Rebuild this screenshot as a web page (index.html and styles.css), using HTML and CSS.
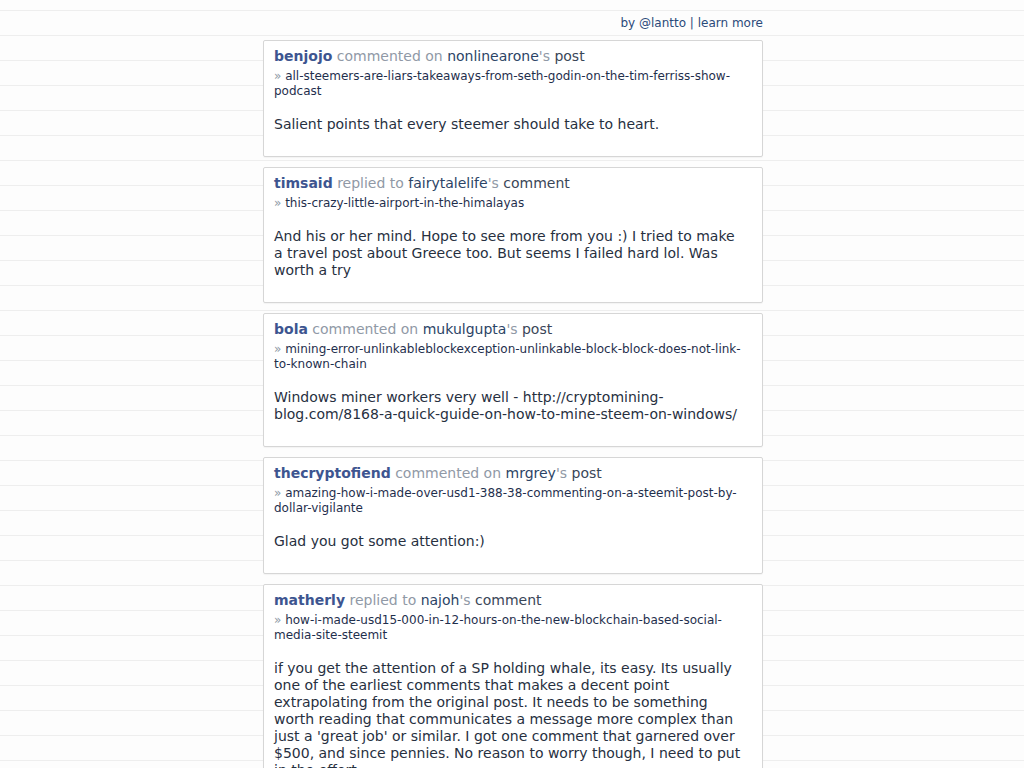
FILE: index.html
```html
<!DOCTYPE html>
<html lang="en">
<head>
<meta charset="utf-8">
<title>Steemit comments</title>
<link rel="stylesheet" href="styles.css">
</head>
<body>
<div class="wrap">
  <div class="top">by <a href="#">@lantto</a> | <a href="#">learn more</a></div>
  <div class="feed">
    <div class="card">
      <div class="title"><a class="user" href="#">benjojo</a> <span class="muted">commented on</span> <a class="author" href="#">nonlinearone</a><span class="muted">'s</span> <span class="kind">post</span></div>
      <div class="slug"><span class="muted">»</span> all-steemers-are-liars-takeaways-from-seth-godin-on-the-tim-ferriss-show-podcast</div>
      <p class="body">Salient points that every steemer should take to heart.</p>
    </div>
    <div class="card">
      <div class="title"><a class="user" href="#">timsaid</a> <span class="muted">replied to</span> <a class="author" href="#">fairytalelife</a><span class="muted">'s</span> <span class="kind">comment</span></div>
      <div class="slug"><span class="muted">»</span> this-crazy-little-airport-in-the-himalayas</div>
      <p class="body">And his or her mind. Hope to see more from you :) I tried to make a travel post about Greece too. But seems I failed hard lol. Was worth a try</p>
    </div>
    <div class="card">
      <div class="title"><a class="user" href="#">bola</a> <span class="muted">commented on</span> <a class="author" href="#">mukulgupta</a><span class="muted">'s</span> <span class="kind">post</span></div>
      <div class="slug"><span class="muted">»</span> mining-error-unlinkableblockexception-unlinkable-block-block-does-not-link-to-known-chain</div>
      <p class="body">Windows miner workers very well - http://cryptomining-blog.com/8168-a-quick-guide-on-how-to-mine-steem-on-windows/</p>
    </div>
    <div class="card">
      <div class="title"><a class="user" href="#">thecryptofiend</a> <span class="muted">commented on</span> <a class="author" href="#">mrgrey</a><span class="muted">'s</span> <span class="kind">post</span></div>
      <div class="slug"><span class="muted">»</span> amazing-how-i-made-over-usd1-388-38-commenting-on-a-steemit-post-by-dollar-vigilante</div>
      <p class="body">Glad you got some attention:)</p>
    </div>
    <div class="card">
      <div class="title"><a class="user" href="#">matherly</a> <span class="muted">replied to</span> <a class="author" href="#">najoh</a><span class="muted">'s</span> <span class="kind">comment</span></div>
      <div class="slug"><span class="muted">»</span> how-i-made-usd15-000-in-12-hours-on-the-new-blockchain-based-social-media-site-steemit</div>
      <p class="body">if you get the attention of a SP holding whale, its easy. Its usually one of the earliest comments that makes a decent point extrapolating from the original post. It needs to be something worth reading that communicates a message more complex than just a 'great job' or similar. I got one comment that garnered over $500, and since pennies. No reason to worry though, I need to put in the effort.</p>
    </div>
  </div>
</div>
</body>
</html>
```
FILE: styles.css
```css
html {
  background-color: #fdfdfd;
  background-image: repeating-linear-gradient(to bottom, transparent 0, transparent 10px, #eeeeee 10px, #eeeeee 11px, transparent 11px, transparent 25px);
}
body {
  margin: 0;
  font-family: "DejaVu Sans", Verdana, sans-serif;
  color: #27303f;
}
a { text-decoration: none; }
.wrap {
  width: 500px;
  margin: 0 0 0 calc(50% - 249px);
  padding-top: 15px;
}
.top {
  text-align: right;
  font-size: 12px;
  line-height: 16px;
  color: #2b4a7a;
  margin-bottom: 9px;
}
.top a { color: #2b4a7a; }
.feed {
  display: flex;
  flex-direction: column;
  gap: 10px;
}
.card {
  background: #fff;
  border: 1px solid #d6d6d6;
  border-radius: 2px;
  box-shadow: 0 1px 1px rgba(0,0,0,0.04);
  padding: 6px 18px 23px 10px;
}
.title {
  font-size: 14px;
  line-height: 18px;
  color: #3a4658;
}
.user {
  font-weight: bold;
  color: #3d5590;
}
.muted { color: #9099a6; }
.author { color: #2c4466; }
.kind { color: #3a4658; }
.slug {
  margin-top: 4px;
  font-size: 12px;
  line-height: 15px;
  color: #1f2f4d;
}
.body {
  margin: 17px 0 0;
  font-size: 14px;
  line-height: 17px;
  color: #27303f;
}
```
